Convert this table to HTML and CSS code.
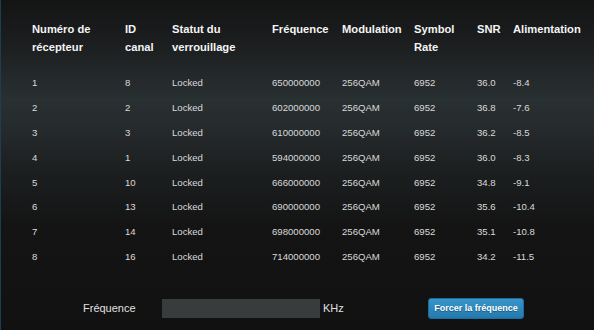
FILE: index.html
```html
<!DOCTYPE html>
<html lang="fr">
<head>
<meta charset="utf-8">
<title>Récepteurs</title>
<link rel="stylesheet" href="styles.css">
</head>
<body>
<div class="page">
  <table class="channels">
    <colgroup>
      <col class="c1"><col class="c2"><col class="c3"><col class="c4">
      <col class="c5"><col class="c6"><col class="c7"><col class="c8">
    </colgroup>
    <thead>
      <tr>
        <th>Numéro de récepteur</th>
        <th>ID canal</th>
        <th>Statut du verrouillage</th>
        <th>Fréquence</th>
        <th>Modulation</th>
        <th>Symbol Rate</th>
        <th>SNR</th>
        <th>Alimentation</th>
      </tr>
    </thead>
    <tbody>
      <tr><td>1</td><td>8</td><td>Locked</td><td>650000000</td><td>256QAM</td><td>6952</td><td>36.0</td><td>-8.4</td></tr>
      <tr><td>2</td><td>2</td><td>Locked</td><td>602000000</td><td>256QAM</td><td>6952</td><td>36.8</td><td>-7.6</td></tr>
      <tr><td>3</td><td>3</td><td>Locked</td><td>610000000</td><td>256QAM</td><td>6952</td><td>36.2</td><td>-8.5</td></tr>
      <tr><td>4</td><td>1</td><td>Locked</td><td>594000000</td><td>256QAM</td><td>6952</td><td>36.0</td><td>-8.3</td></tr>
      <tr><td>5</td><td>10</td><td>Locked</td><td>666000000</td><td>256QAM</td><td>6952</td><td>34.8</td><td>-9.1</td></tr>
      <tr><td>6</td><td>13</td><td>Locked</td><td>690000000</td><td>256QAM</td><td>6952</td><td>35.6</td><td>-10.4</td></tr>
      <tr><td>7</td><td>14</td><td>Locked</td><td>698000000</td><td>256QAM</td><td>6952</td><td>35.1</td><td>-10.8</td></tr>
      <tr><td>8</td><td>16</td><td>Locked</td><td>714000000</td><td>256QAM</td><td>6952</td><td>34.2</td><td>-11.5</td></tr>
    </tbody>
  </table>
  <form class="force-row" onsubmit="return false">
    <label class="force-label" for="freq">Fréquence</label>
    <input class="force-input" id="freq" type="text">
    <span class="unit">KHz</span>
    <button class="force-btn" type="button">Forcer la fréquence</button>
  </form>
</div>
</body>
</html>
```
FILE: styles.css
```css
html, body {
  margin: 0;
  padding: 0;
  height: 100%;
}
body {
  background: linear-gradient(to bottom, #141414 0px, #1b1d1e 40px, #293032 100px, #262b2d 125px, #1b1e1f 175px, #141414 225px, #111111 330px);
  border-left: 1px solid #1d3d52;
  box-sizing: border-box;
  font-family: "Liberation Sans", Arial, sans-serif;
  color: #dcdcdc;
  overflow: hidden;
}
.page {
  padding: 21px 0 0 31px;
}
.channels {
  border-collapse: collapse;
  table-layout: fixed;
  width: 560px;
}
.c1 { width: 93px; }
.c2 { width: 47px; }
.c3 { width: 100px; }
.c4 { width: 70px; }
.c5 { width: 72px; }
.c6 { width: 63px; }
.c7 { width: 36px; }
.c8 { width: 79px; }
.channels th {
  text-align: left;
  vertical-align: top;
  font-size: 11.2px;
  font-weight: bold;
  line-height: 17.6px;
  color: #f4f4f4;
  padding: 0 8px 15px 0;
}
.channels td {
  font-size: 9.6px;
  line-height: 24.86px;
  padding: 0 8px 0 0;
  color: #dadada;
  white-space: nowrap;
}
.force-row {
  display: flex;
  align-items: center;
  margin: 27.5px 0 0 0;
  padding-left: 51px;
}
.force-label {
  width: 79px;
  font-size: 11px;
  color: #e0e0e0;
}
.force-input {
  width: 158px;
  height: 19px;
  box-sizing: border-box;
  border: none;
  background: #383c3d;
  padding: 0;
  margin: 0;
}
.unit {
  width: 105px;
  margin-left: 3px;
  font-size: 11px;
  color: #e0e0e0;
}
.force-btn {
  width: 96px;
  height: 21px;
  padding: 0;
  border: 1px solid #1f6d9c;
  border-radius: 3px;
  background: linear-gradient(to bottom, #3796cb, #2379ad);
  color: #ffffff;
  font-family: "Liberation Sans", Arial, sans-serif;
  font-weight: bold;
  font-size: 9px;
  text-shadow: 0 1px 1px rgba(0, 0, 0, 0.35);
}
```
